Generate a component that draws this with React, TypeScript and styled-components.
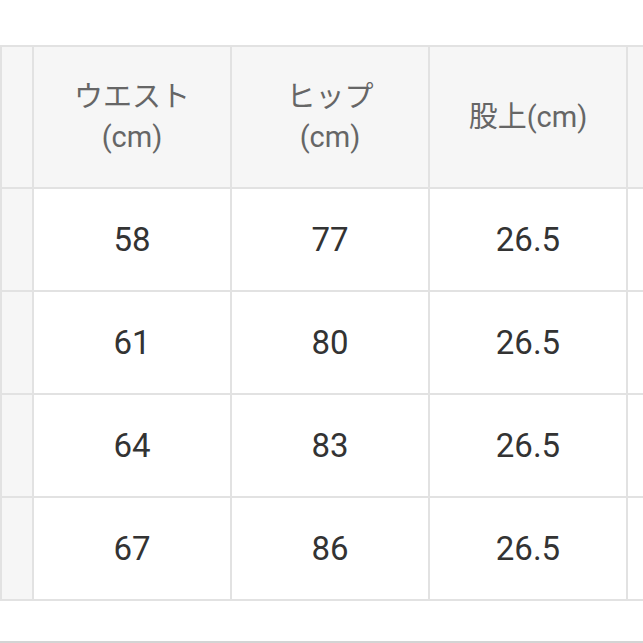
import React from 'react'
import styled, { createGlobalStyle } from 'styled-components'

const GlobalStyle = createGlobalStyle`
  html, body {
    margin: 0;
    padding: 0;
    background: #ffffff;
  }
  body {
    font-family: Roboto, "Noto Sans CJK JP", "Noto Sans", sans-serif;
  }
`

const Page = styled.div`
  width: 643px;
  height: 643px;
  overflow: hidden;
  padding-top: 45px;
  box-sizing: border-box;
`

const Table = styled.table`
  border-collapse: collapse;
  table-layout: fixed;
  width: 660px;
`

const HeadCell = styled.th<{ $width?: number }>`
  width: ${p => (p.$width ? `${p.$width}px` : 'auto')};
  height: 140px;
  padding: 0;
  border: 2px solid #e2e2e2;
  background: #f6f6f6;
  color: #666666;
  font-weight: 400;
  font-size: 29px;
  line-height: 40px;
  text-align: center;
  vertical-align: middle;
`

const SideCell = styled.th`
  height: 101px;
  padding: 0;
  border: 2px solid #e2e2e2;
  background: #f6f6f6;
`

const Cell = styled.td`
  height: 101px;
  padding: 0;
  border: 2px solid #e2e2e2;
  background: #ffffff;
  color: #333333;
  font-size: 33px;
  text-align: center;
  vertical-align: middle;
`

const BottomRule = styled.div`
  margin-top: 40px;
  height: 2px;
  background: #d4d4d4;
`

const rows = [
  { waist: 58, hip: 77, rise: '26.5' },
  { waist: 61, hip: 80, rise: '26.5' },
  { waist: 64, hip: 83, rise: '26.5' },
  { waist: 67, hip: 86, rise: '26.5' },
]

const App = () => {
  return (
    <>
      <GlobalStyle />
      <Page>
        <Table>
          <thead>
            <tr>
              <HeadCell $width={30} />
              <HeadCell $width={196}>ウエスト<br />(cm)</HeadCell>
              <HeadCell $width={196}>ヒップ<br />(cm)</HeadCell>
              <HeadCell $width={196}>股上(cm)</HeadCell>
              <HeadCell />
            </tr>
          </thead>
          <tbody>
            {rows.map(row => (
              <tr key={row.waist}>
                <SideCell />
                <Cell>{row.waist}</Cell>
                <Cell>{row.hip}</Cell>
                <Cell>{row.rise}</Cell>
                <Cell />
              </tr>
            ))}
          </tbody>
        </Table>
        <BottomRule />
      </Page>
    </>
  )
}

export default App
